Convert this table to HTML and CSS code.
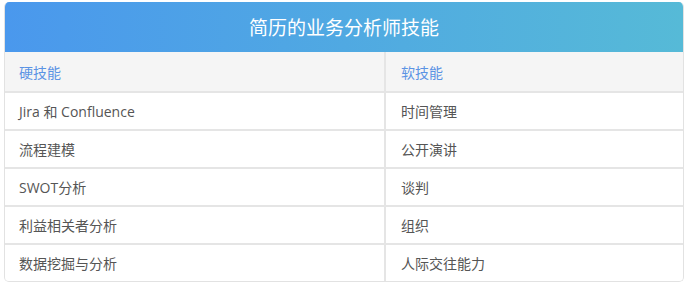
FILE: index.html
```html
<!DOCTYPE html>
<html lang="zh">
<head>
<meta charset="utf-8">
<link rel="stylesheet" href="styles.css">
</head>
<body>
<div class="card">
  <div class="title">简历的业务分析师技能</div>
  <div class="grid">
    <div class="cell head">硬技能</div>
    <div class="cell head">软技能</div>
    <div class="cell">Jira 和 Confluence</div>
    <div class="cell">时间管理</div>
    <div class="cell">流程建模</div>
    <div class="cell">公开演讲</div>
    <div class="cell">SWOT分析</div>
    <div class="cell">谈判</div>
    <div class="cell">利益相关者分析</div>
    <div class="cell">组织</div>
    <div class="cell">数据挖掘与分析</div>
    <div class="cell">人际交往能力</div>
  </div>
</div>
</body>
</html>
```
FILE: styles.css
```css
html, body {
  margin: 0;
  padding: 0;
  background: #fff;
}
body {
  padding: 2px 5px 0 4px;
  font-family: "Open Sans", "Noto Sans CJK SC", sans-serif;
}
.card {
  width: 678px;
  border: 1px solid #e2e2e2;
  border-top: none;
  border-radius: 5px;
  overflow: hidden;
}
.title {
  height: 50px;
  display: flex;
  align-items: center;
  justify-content: center;
  color: #fff;
  font-size: 19px;
  background: linear-gradient(to right, #4a98ed, #56bad7);
}
.grid {
  display: grid;
  grid-template-columns: 379px 1fr;
  grid-template-rows: 39px;
  grid-auto-rows: 36px;
  gap: 2px;
  background: #e5e5e5;
}
.cell {
  background: #fff;
  display: flex;
  align-items: center;
  padding: 0 15px 0 14px;
  font-size: 14px;
  color: #555;
}
.cell:nth-child(2n) {
  padding-left: 15px;
}
.cell.head {
  background: #f5f5f5;
  color: #5b93e4;
}
```
